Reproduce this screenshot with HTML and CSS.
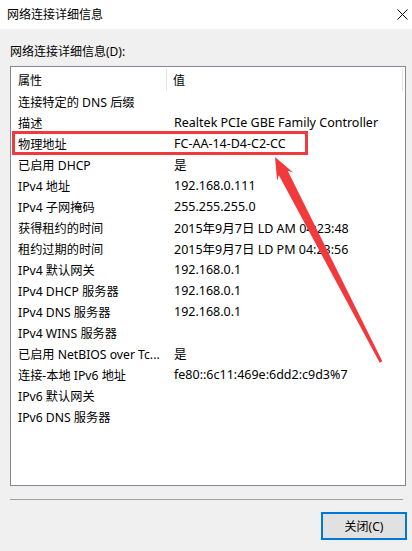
FILE: index.html
```html
<!DOCTYPE html>
<html lang="zh-CN">
<head>
<meta charset="utf-8">
<title>网络连接详细信息</title>
<link rel="stylesheet" href="styles.css">
</head>
<body>
<div class="window">
  <div class="titlebar">
    <span class="title">网络连接详细信息</span>
    <svg class="close" width="11" height="11" viewBox="0 0 11 11"><path d="M0.5 0.5 L10.5 10.5 M10.5 0.5 L0.5 10.5" stroke="#000" stroke-width="1" fill="none"/></svg>
  </div>
  <div class="content">
    <div class="label">网络连接详细信息(D):</div>
    <div class="list">
      <div class="head">
        <div class="hcell hprop">属性</div>
        <div class="hcell hval">值</div>
      </div>
      <div class="row"><span class="prop">连接特定的 DNS 后缀</span><span class="val"></span></div>
      <div class="row"><span class="prop">描述</span><span class="val">Realtek PCIe GBE Family Controller</span></div>
      <div class="row"><span class="prop">物理地址</span><span class="val">FC-AA-14-D4-C2-CC</span></div>
      <div class="row"><span class="prop">已启用 DHCP</span><span class="val">是</span></div>
      <div class="row"><span class="prop">IPv4 地址</span><span class="val">192.168.0.111</span></div>
      <div class="row"><span class="prop">IPv4 子网掩码</span><span class="val">255.255.255.0</span></div>
      <div class="row"><span class="prop">获得租约的时间</span><span class="val">2015年9月7日 LD AM 04:23:48</span></div>
      <div class="row"><span class="prop">租约过期的时间</span><span class="val">2015年9月7日 LD PM 04:23:56</span></div>
      <div class="row"><span class="prop">IPv4 默认网关</span><span class="val">192.168.0.1</span></div>
      <div class="row"><span class="prop">IPv4 DHCP 服务器</span><span class="val">192.168.0.1</span></div>
      <div class="row"><span class="prop">IPv4 DNS 服务器</span><span class="val">192.168.0.1</span></div>
      <div class="row"><span class="prop">IPv4 WINS 服务器</span><span class="val"></span></div>
      <div class="row"><span class="prop">已启用 NetBIOS over Tc...</span><span class="val">是</span></div>
      <div class="row"><span class="prop">连接-本地 IPv6 地址</span><span class="val">fe80::6c11:469e:6dd2:c9d3%7</span></div>
      <div class="row"><span class="prop">IPv6 默认网关</span><span class="val"></span></div>
      <div class="row"><span class="prop">IPv6 DNS 服务器</span><span class="val"></span></div>
    </div>
    <div class="sep"></div>
    <div class="footer">
      <button class="btn">关闭(C)</button>
    </div>
  </div>
  <svg class="annot" width="412" height="551" viewBox="0 0 412 551">
    <rect x="13.5" y="132.5" width="293" height="21" fill="none" stroke="#f03a3c" stroke-width="3"/>
    <polygon fill="#f03a3c" points="275,157 293.1,172.4 287.7,170.7 382.3,361.3 379.7,362.7 278.9,175.3 277.1,180.7"/>
  </svg>
</div>
</body>
</html>
```

FILE: styles.css
```css
* { box-sizing: border-box; }
html, body { margin: 0; padding: 0; }
body {
  width: 412px;
  height: 551px;
  overflow: hidden;
  font-family: "Noto Sans", "Noto Sans CJK SC", sans-serif;
  font-size: 12px;
  color: #000;
  background: #f0f0f0;
}
.window {
  position: relative;
  width: 412px;
  height: 551px;
  display: flex;
  flex-direction: column;
}
.titlebar {
  height: 29px;
  background: #fff;
  display: flex;
  align-items: center;
  justify-content: space-between;
  padding: 0 4px 0 7px;
}
.title { line-height: 16px; }
.close { display: block; margin-top: -1px; }
.content {
  flex: 1;
  background: #f0f0f0;
  padding: 15px 6px 0 10px;
  display: flex;
  flex-direction: column;
}
.label { line-height: 16px; height: 16px; margin-bottom: 6px; }
.list {
  height: 420px;
  background: #fff;
  border: 1px solid #828790;
}
.head {
  display: grid;
  grid-template-columns: 156px 236px;
  height: 24px;
}
.hcell {
  display: flex;
  align-items: center;
  border-right: 1px solid #e5e5e5;
  margin: 1px 0 0 0;
}
.hprop { padding-left: 7px; }
.hval { padding-left: 6px; }
.row {
  display: grid;
  grid-template-columns: 163px 1fr;
  height: 21px;
  align-items: center;
  white-space: nowrap;
}
.prop { padding-left: 7px; overflow: hidden; font-size: 12.2px; }
.val { font-size: 12.5px; }
.sep {
  height: 1px;
  background: #a0a0a0;
  margin: 13px 3px 0 0;
}
.footer {
  display: flex;
  justify-content: flex-end;
  padding-top: 12px;
}
.btn {
  width: 86px;
  height: 28px;
  margin-right: -1px;
  border: 2px solid #0078d7;
  background: #e1e1e1;
  font: inherit;
  color: #000;
  padding: 0;
}
.annot {
  position: absolute;
  left: 0;
  top: 0;
  pointer-events: none;
}
```
